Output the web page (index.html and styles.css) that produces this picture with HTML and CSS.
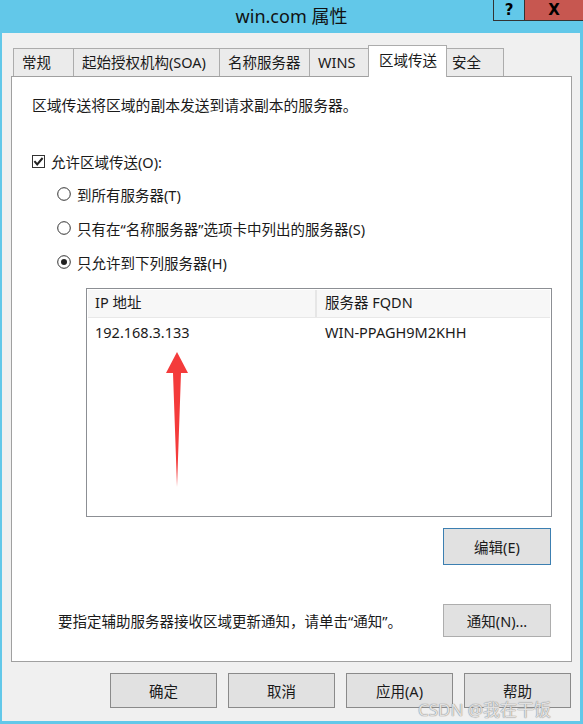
FILE: index.html
```html
<!doctype html>
<html lang="zh-CN">
    <head>
        <meta charset="utf-8">
        <title>win.com 属性</title>
        <link rel="stylesheet" href="styles.css">
    </head>
    <body>
        <div class="window">
            <div class="titlebar">
                <span></span>
                <span class="title">win.com 属性</span>
                <div class="controls">
                    <span class="ctl help">?</span>
                    <span class="ctl close">X</span>
                </div>
            </div>
            <div class="client">
                <ul class="tabs">
                    <li class="tab t1">常规</li>
                    <li class="tab t2">起始授权机构(SOA)</li>
                    <li class="tab t3">名称服务器</li>
                    <li class="tab t4">WINS</li>
                    <li class="tab t5 active">区域传送</li>
                    <li class="tab t6">安全</li>
                </ul>
                <div class="panel">
                    <p class="desc">区域传送将区域的副本发送到请求副本的服务器。</p>
                    <div class="opt check-row">
                        <svg class="check" width="13" height="13" viewBox="0 0 13 13">
                            <rect x="0.5" y="0.5" width="12" height="12" fill="#fff" stroke="#333"/>
                            <path d="M2.4 6.2 L5.2 9.4 L10.6 3" fill="none" stroke="#222" stroke-width="2"/>
                        </svg>
                        <span>允许区域传送(O):</span>
                    </div>
                    <div class="radios">
                        <div class="opt">
                            <svg class="radio" width="14" height="14" viewBox="0 0 14 14">
                                <circle cx="7" cy="7" r="6.3" fill="#fff" stroke="#333"/>
                            </svg>
                            <span>到所有服务器(T)</span>
                        </div>
                        <div class="opt">
                            <svg class="radio" width="14" height="14" viewBox="0 0 14 14">
                                <circle cx="7" cy="7" r="6.3" fill="#fff" stroke="#333"/>
                            </svg>
                            <span>只有在“名称服务器”选项卡中列出的服务器(S)</span>
                        </div>
                        <div class="opt">
                            <svg class="radio" width="14" height="14" viewBox="0 0 14 14">
                                <circle cx="7" cy="7" r="6.3" fill="#fff" stroke="#333"/>
                                <circle cx="7" cy="7" r="3" fill="#222"/>
                            </svg>
                            <span>只允许到下列服务器(H)</span>
                        </div>
                    </div>
                    <div class="listbox">
                        <div class="list-head">
                            <span class="col1">IP 地址</span>
                            <span class="col2">服务器 FQDN</span>
                        </div>
                        <div class="list-row">
                            <span class="col1">192.168.3.133</span>
                            <span class="col2">WIN-PPAGH9M2KHH</span>
                        </div>
                        <svg class="arrow" width="22" height="136" viewBox="0 0 22 136">
                            <polygon points="11,0 22,21 15,21 11,135 7,21 0,21" fill="#f43b3b"/>
                        </svg>
                    </div>
                    <button class="btn edit">编辑(E)</button>
                    <div class="note-row">
                        <span class="note">要指定辅助服务器接收区域更新通知，请单击“通知”。</span>
                        <button class="btn notify">通知(N)...</button>
                    </div>
                </div>
                <div class="actions">
                    <button class="btn big">确定</button>
                    <button class="btn big">取消</button>
                    <button class="btn big">应用(A)</button>
                    <button class="btn big">帮助</button>
                </div>
            </div>
            <span class="watermark">CSDN @我在干饭</span>
        </div>
    </body>
</html>
```

FILE: styles.css
```css
body {
    margin: 0;
    font-family: "Noto Sans", "Noto Sans CJK SC", sans-serif;
    font-size: 14.5px;
    color: #1a1a1a;
}
.window {
    position: relative;
    width: 583px;
    height: 724px;
    background: #62c8e9;
    overflow: hidden;
}
.titlebar {
    height: 33px;
    display: grid;
    grid-template-columns: 1fr auto 1fr;
}
.title {
    font-size: 18px;
    line-height: 33px;
    color: #111;
}
.controls {
    justify-self: end;
    display: flex;
    height: 21px;
}
.ctl {
    display: flex;
    justify-content: center;
    align-items: center;
    font-family: "DejaVu Sans", sans-serif;
    font-weight: bold;
    font-size: 15px;
    color: #000;
}
.help {
    width: 32px;
    border: 1px solid #333;
    border-top: none;
    box-sizing: border-box;
}
.close {
    width: 58px;
    background: #c75750;
    border-bottom: 1px solid #333;
    box-sizing: border-box;
}
.client {
    margin-left: 2px;
    width: 578px;
    height: 688px;
    background: #f0f0f0;
    display: flex;
    flex-direction: column;
}
.tabs {
    list-style-type: none;
    margin: 12px 0 0 11px;
    padding: 0;
    display: flex;
    align-items: flex-end;
    position: relative;
    z-index: 1;
}
.tab {
    height: 28px;
    box-sizing: border-box;
    border: 1px solid #acacac;
    border-bottom: none;
    border-right: none;
    background: #ebebeb;
    padding: 0 8px;
    line-height: 27px;
    white-space: nowrap;
}
.t1 { width: 60px; }
.t2 { width: 146px; }
.t3 { width: 90px; }
.t4 { width: 59px; }
.t5 { width: 79px; }
.t6 { width: 57px; border-right: 1px solid #acacac; padding-left: 5px; }
.tab.active {
    height: 32px;
    margin-bottom: -1px;
    background: #fff;
    border-right: 1px solid #acacac;
    line-height: 28px;
    padding-left: 10px;
}
.tab.active + .tab {
    border-left: none;
}
.panel {
    margin-left: 9px;
    width: 561px;
    height: 586px;
    box-sizing: border-box;
    border: 1px solid #a0a0a0;
    background: #fff;
    padding: 18px 20px 0 20px;
    display: flex;
    flex-direction: column;
}
.desc {
    margin: 0;
    line-height: 20px;
    font-size: 14.8px;
}
.opt {
    display: flex;
    align-items: center;
    height: 20px;
    gap: 6px;
}
.check-row {
    margin-top: 36px;
}
.radios {
    margin-left: 25px;
    display: flex;
    flex-direction: column;
    gap: 14px;
    margin-top: 13px;
}
.radio {
    flex: none;
}
.listbox {
    position: relative;
    margin: 16px 0 0 54px;
    width: 466px;
    height: 229px;
    box-sizing: border-box;
    border: 1px solid #8c8f94;
}
.list-head {
    display: flex;
    height: 27px;
    background: #f7f7f7;
    border-bottom: 1px solid #e8e8e8;
    margin: 1px 1px 0 1px;
    line-height: 25px;
}
.list-head .col1 {
    border-right: 2px solid #e6e6e6;
}
.col1 {
    width: 229px;
    box-sizing: border-box;
    padding-left: 7px;
}
.col2 {
    padding-left: 8px;
}
.list-row {
    display: flex;
    height: 28px;
    line-height: 28px;
    margin: 0 1px;
}
.list-row .col1 {
    width: 229px;
}
.arrow {
    position: absolute;
    left: 79px;
    top: 63px;
}
.btn {
    font-family: inherit;
    font-size: 14.5px;
    color: #1a1a1a;
    background: #e1e1e1;
    border: 1px solid #adadad;
    padding: 0;
}
.edit {
    align-self: flex-end;
    margin-top: 11px;
    width: 108px;
    height: 37px;
    border-color: #3c7fb1;
}
.note-row {
    margin-top: 39px;
    display: flex;
    justify-content: space-between;
    align-items: center;
}
.note {
    margin-left: 26px;
}
.notify {
    width: 108px;
    height: 33px;
}
.actions {
    margin-top: 11px;
    padding-left: 108px;
    display: flex;
    gap: 11px;
}
.big {
    width: 107px;
    height: 35px;
    border-color: #8a8a8a;
}
.watermark {
    position: absolute;
    left: 418px;
    top: 696px;
    font-size: 17px;
    color: rgba(255, 255, 255, 0.75);
    text-shadow: 0 0 1px #888, 0 0 1px #888;
    white-space: nowrap;
}
```
